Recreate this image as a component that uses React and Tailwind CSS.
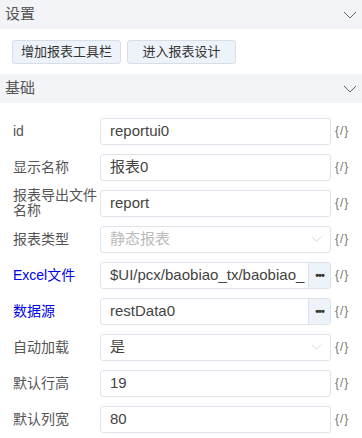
import React from "react";

const font = { fontFamily: '"Liberation Sans", "Noto Sans CJK SC", sans-serif' };

const Chevron = ({ className }) => (
  <svg className={className} width="14" height="8" viewBox="0 0 14 8" fill="none">
    <path d="M1 1l6 6 6-6" stroke="currentColor" strokeWidth="1" />
  </svg>
);

const SectionHeader = ({ title }) => (
  <div className="flex items-center justify-between h-[29px] bg-[#f3f4f8] pl-[5px] pr-[5px]">
    <span className="text-[15px] text-[#555]">{title}</span>
    <Chevron className="text-[#666]" />
  </div>
);

const Expr = () => (
  <div className="w-[31px] shrink-0 pl-[4px] text-[12px] text-[#777] tracking-[1px]">{"{/}"}</div>
);

const Row = ({ label, blue, children }) => (
  <div className="flex items-center h-[36px] pl-[13px]">
    <div
      className={`w-[87px] shrink-0 text-[14px] leading-[15px] ${blue ? "text-[#0000ee]" : "text-[#555]"}`}
    >
      {label}
    </div>
    <div className="flex-1 min-w-0 h-[27px] flex items-center border border-[#dde3ec] rounded-[3px] bg-white overflow-hidden">
      {children}
    </div>
    <Expr />
  </div>
);

const Text = ({ value, muted }) => (
  <span
    className={`flex-1 min-w-0 pl-[9px] text-[15px] whitespace-nowrap overflow-hidden ${muted ? "text-[#bbb]" : "text-[#444]"}`}
  >
    {value}
  </span>
);

const Dots = () => (
  <div className="w-[22px] shrink-0 h-full flex items-center justify-center border-l border-[#dde3ec] bg-[#eef2f9]">
    <span className="text-[#333] font-bold text-[11px] leading-none tracking-[-1px]">•••</span>
  </div>
);

export default function App() {
  return (
    <div className="w-[362px] h-[438px] bg-white overflow-hidden" style={font}>
      <SectionHeader title="设置" />
      <div className="flex gap-[6px] pl-[12px] pt-[11px] pb-[10px] h-[45px]">
        <button className="w-[109px] h-[24px] rounded-[3px] border border-[#d8dee8] bg-[#eef3fa] text-[13px] text-[#333]">
          增加报表工具栏
        </button>
        <button className="w-[109px] h-[24px] rounded-[3px] border border-[#d8dee8] bg-[#eef3fa] text-[13px] text-[#333]">
          进入报表设计
        </button>
      </div>
      <SectionHeader title="基础" />
      <div className="pt-[10px]">
        <Row label="id">
          <Text value="reportui0" />
        </Row>
        <Row label="显示名称">
          <Text value="报表0" />
        </Row>
        <Row label="报表导出文件名称">
          <Text value="report" />
        </Row>
        <Row label="报表类型">
          <Text value="静态报表" muted />
          <Chevron className="text-[#ccc] mr-[8px] w-[11px] shrink-0" />
        </Row>
        <Row label="Excel文件" blue>
          <Text value="$UI/pcx/baobiao_tx/baobiao_" />
          <Dots />
        </Row>
        <Row label="数据源" blue>
          <Text value="restData0" />
          <Dots />
        </Row>
        <Row label="自动加载">
          <Text value="是" />
          <Chevron className="text-[#ccc] mr-[8px] w-[11px] shrink-0" />
        </Row>
        <Row label="默认行高">
          <Text value="19" />
        </Row>
        <Row label="默认列宽">
          <Text value="80" />
        </Row>
      </div>
    </div>
  );
}
